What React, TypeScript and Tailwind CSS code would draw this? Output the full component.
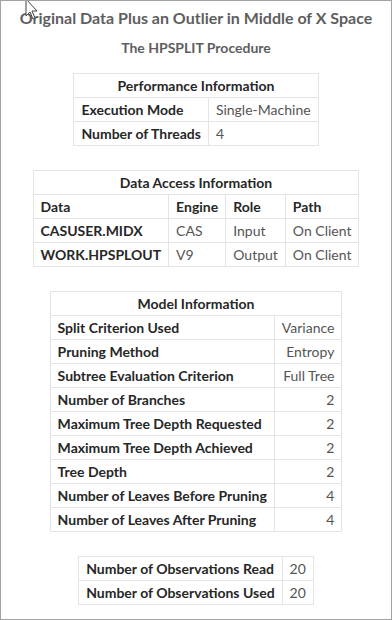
import React from "react";

const font = { fontFamily: "Lato, 'Open Sans', sans-serif" };

const td = "border border-[#e4e4e4] h-[24px] px-[7px] py-0 leading-[22px] whitespace-nowrap";
const th = td + " font-bold text-[#272727]";
const val = td + " text-[#555555]";

export default function App() {
  return (
    <div className="relative w-[392px] h-[620px] bg-white border border-[#a3a3a3] overflow-hidden text-[14px]" style={font}>
      <div className="flex flex-col items-center">
        <div className="mt-[5px] text-[16px] font-bold text-[#5e5e5e] leading-[24px] whitespace-nowrap">Original Data Plus an Outlier in Middle of X Space</div>
        <div className="mt-[8px] text-[14px] font-bold text-[#5e5e5e] leading-[20px]">The HPSPLIT Procedure</div>
        <table className="mt-[15px] border-collapse">
          <tbody>
            <tr><td colSpan={2} className={th + " text-center"}>Performance Information</td></tr>
            <tr><td className={th}>Execution Mode</td><td className={val}>Single-Machine</td></tr>
            <tr><td className={th}>Number of Threads</td><td className={val}>4</td></tr>
          </tbody>
        </table>
        <table className="mt-[24px] border-collapse">
          <tbody>
            <tr><td colSpan={4} className={th + " text-center"}>Data Access Information</td></tr>
            <tr><td className={th}>Data</td><td className={th}>Engine</td><td className={th}>Role</td><td className={th}>Path</td></tr>
            <tr><td className={th}>CASUSER.MIDX</td><td className={val}>CAS</td><td className={val}>Input</td><td className={val}>On Client</td></tr>
            <tr><td className={th}>WORK.HPSPLOUT</td><td className={val}>V9</td><td className={val}>Output</td><td className={val}>On Client</td></tr>
          </tbody>
        </table>
        <table className="mt-[24px] border-collapse">
          <tbody>
            <tr><td colSpan={2} className={th + " text-center"}>Model Information</td></tr>
            {[
              ["Split Criterion Used", "Variance"],
              ["Pruning Method", "Entropy"],
              ["Subtree Evaluation Criterion", "Full Tree"],
              ["Number of Branches", "2"],
              ["Maximum Tree Depth Requested", "2"],
              ["Maximum Tree Depth Achieved", "2"],
              ["Tree Depth", "2"],
              ["Number of Leaves Before Pruning", "4"],
              ["Number of Leaves After Pruning", "4"],
            ].map(([k, v]) => (
              <tr key={k}><td className={th}>{k}</td><td className={val + " text-right"}>{v}</td></tr>
            ))}
          </tbody>
        </table>
        <table className="mt-[24px] border-collapse">
          <tbody>
            <tr><td className={th}>Number of Observations Read</td><td className={val}>20</td></tr>
            <tr><td className={th}>Number of Observations Used</td><td className={val}>20</td></tr>
          </tbody>
        </table>
      </div>
      <svg className="absolute left-[24px] top-0" width="14" height="20" viewBox="0 0 14 20">
        <path d="M1 -2 L1 15 L5 11 L8 18 L10 17 L7 10 L12 10 Z" fill="white" stroke="#444" strokeWidth="1" />
      </svg>
    </div>
  );
}
